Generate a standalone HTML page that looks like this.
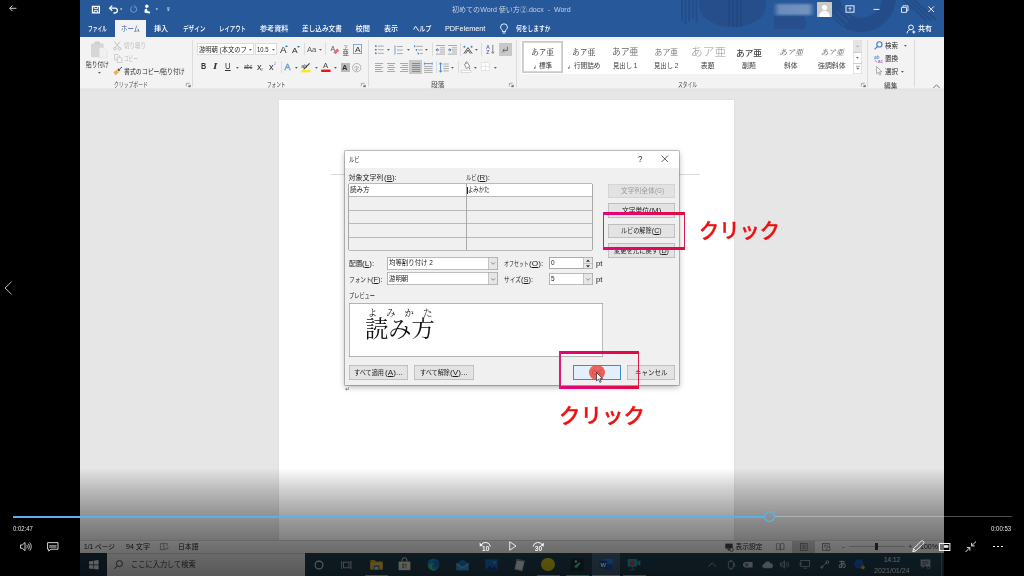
<!DOCTYPE html>
<html lang="ja"><head><meta charset="utf-8"><title>ルビ - Word</title>
<style>
html,body{margin:0;padding:0;background:#000;}
#root{position:relative;width:1024px;height:576px;overflow:hidden;background:#000;will-change:transform;font-family:"Liberation Sans","Noto Sans CJK JP",sans-serif;}
.t{position:absolute;white-space:nowrap;line-height:1;transform-origin:0 50%;}
svg{position:absolute;overflow:visible;}
</style></head><body><div id="root">
<div id="vid" style="position:absolute;left:0;top:0;width:1024px;height:576px;filter:blur(0.55px);will-change:transform">
<div style="position:absolute;left:80px;top:0px;width:864px;height:576px;background:#e6e6e6;"></div>
<div style="position:absolute;left:80px;top:0px;width:864px;height:37px;background:#27589a;"></div>
<div style="position:absolute;left:80px;top:37px;width:864px;height:51px;background:#f3f3f3;"></div>
<div style="position:absolute;left:80px;top:88px;width:864px;height:3px;background:linear-gradient(180deg,#ececec,#e3e3e3 55%,#e6e6e6);"></div>
<div style="position:absolute;left:279.2px;top:99.9px;width:454.9px;height:441.1px;background:#fff;box-shadow:0 0 0 0.6px #dedede;"></div>
<div style="position:absolute;left:331px;top:174.2px;width:369px;height:0.8px;background:#d9d9d9;"></div>
<div style="position:absolute;left:80px;top:540.5px;width:864px;height:12.5px;background:#f3f3f3;"></div>
<div style="position:absolute;left:80px;top:540.3px;width:864px;height:0.7px;background:#d0d0d0;"></div>
<div style="position:absolute;left:80px;top:552.8px;width:864px;height:23.2px;background:#1f3a52;"></div>
<svg style="left:80px;top:0" width="864" height="37" viewBox="80 0 864 37"><g fill="none" stroke="#244c88"><path d="M682 0v21M685.600 0v24M689.200 0v22M692.800 0v19M696.400 0v23" stroke-width="1.800"/><path d="M699 0h67v6a33.500 21 0 0 1-67 0z" fill="#254e8b" stroke="none"/><path d="M729 0v26M733 0v27M737 0v27M741 0v26" stroke="#224882" stroke-width="2"/><path d="M774 16h30a11 11 0 0 1 0 13h-30z" fill="#264f8c" stroke="none"/><circle cx="861" cy="-3" r="28" stroke-width="14"/><path d="M832 14l12 12M836 11l12 12M840 8l11 11" stroke="#2b579a" stroke-width="1.200"/><path d="M904 0l22 20M909 0l22 20M914 0l22 20" stroke-width="1.800"/></g></svg>
<svg style="left:80px;top:0" width="120" height="20" viewBox="80 0 120 20" fill="none" stroke="#fff" stroke-width="1.1"><path d="M92.400 6.400h7v6.400h-7z" stroke-width="1.200"/><path d="M94.200 6.400v2.200h3.400V6.400M94.200 12.800v-2.200h3.400v2.200" stroke-width="0.9"/><path d="M110 8.2h5a2.4 2.4 0 0 1 0 4.8h-1.5" stroke-width="1.3"/><path d="M112.2 5.6l-2.6 2.6 2.6 2.6" stroke-width="1.3"/><path d="M120 8.6l1.2 1.3 1.2-1.3z" fill="#fff" stroke="none"/><path d="M135.8 7.2a3 3 0 1 1-3.4-.6" stroke="#6f8fc2" stroke-width="1.1"/><path d="M133.6 5l2.4 1.8-2.2 1.2" stroke="#6f8fc2" stroke-width="0.9"/><circle cx="146.8" cy="6.3" r="1.7" fill="#fff" stroke="none"/><path d="M144.6 12.8v-3.2l2.2-1 .6 2.2 2.6 1v1.6z" fill="#fff" stroke="none"/><path d="M155.6 8.6l1.2 1.3 1.2-1.3z" fill="#fff" stroke="none"/><path d="M167 9.6l1.3 1.3 1.3-1.3z" fill="#fff" stroke="none"/><path d="M167 8h2.6" stroke-width="0.8"/></svg>
<span class="t" style="left:451.6px;top:5.6px;font-size:7.2px;color:#c6d2e6;transform:scaleX(0.979);">初めてのWord 使い方②.docx&nbsp; -&nbsp; Word</span>
<div style="position:absolute;left:773px;top:3.5px;width:42px;height:11px;background:linear-gradient(90deg,rgba(190,205,228,.0),rgba(190,205,228,.45) 15%,rgba(190,205,228,.5) 85%,rgba(190,205,228,0));filter:blur(1.2px)"></div>
<svg style="left:817px;top:1.5px" width="15" height="15" viewBox="0 0 15 15"><rect width="15" height="15" rx="0.5" fill="#c9c9c9"/><circle cx="7.5" cy="5.6" r="2.7" fill="#fff"/><path d="M2.2 15c0-4.4 2.3-6 5.3-6s5.3 1.6 5.3 6z" fill="#fff"/></svg>
<svg style="left:840px;top:0" width="104" height="20" viewBox="840 0 104 20" fill="none" stroke="#e9eef7" stroke-width="1"><rect x="846" y="5.8" width="8" height="6.4"/><path d="M850 10.6V7.8M848.6 9l1.4-1.4 1.4 1.4" stroke-width="0.9"/><path d="M873.5 9.4h6"/><path d="M901.5 7.4h5v5h-5zM903 7.4V5.8h5v5h-1.5" stroke-width="0.9"/><path d="M928.4 6.4l5.6 5.6M934 6.4l-5.6 5.6"/></svg>
<div style="position:absolute;left:114.6px;top:19.6px;width:31.6px;height:17.6px;background:#f3f3f3;"></div>
<span class="t" style="left:87.6px;top:24.6px;font-size:7.2px;color:#fff;font-weight:500;transform:scaleX(0.654);">ファイル</span>
<span class="t" style="left:120.5px;top:24.6px;font-size:7.2px;color:#3c5f9e;transform:scaleX(0.89);">ホーム</span>
<span class="t" style="left:153.5px;top:24.6px;font-size:7.2px;color:#fff;font-weight:500;transform:scaleX(0.98);">挿入</span>
<span class="t" style="left:182.5px;top:24.6px;font-size:7.2px;color:#fff;font-weight:500;transform:scaleX(0.782);">デザイン</span>
<span class="t" style="left:218.5px;top:24.6px;font-size:7.2px;color:#fff;font-weight:500;transform:scaleX(0.751);">レイアウト</span>
<span class="t" style="left:259.6px;top:24.6px;font-size:7.2px;color:#fff;font-weight:500;transform:scaleX(0.987);">参考資料</span>
<span class="t" style="left:301.6px;top:24.6px;font-size:7.2px;color:#fff;font-weight:500;transform:scaleX(0.925);">差し込み文書</span>
<span class="t" style="left:355.6px;top:24.6px;font-size:7.2px;color:#fff;font-weight:500;">校閲</span>
<span class="t" style="left:384.2px;top:24.6px;font-size:7.2px;color:#fff;font-weight:500;transform:scaleX(0.987);">表示</span>
<span class="t" style="left:412.6px;top:24.6px;font-size:7.2px;color:#fff;font-weight:500;transform:scaleX(0.853);">ヘルプ</span>
<span class="t" style="left:444.6px;top:24.6px;font-size:7.2px;color:#fff;font-weight:500;transform:scaleX(1.011);">PDFelement</span>
<span class="t" style="left:516px;top:24.6px;font-size:7.2px;color:#fff;font-weight:500;transform:scaleX(0.8);">何をしますか</span>
<svg style="left:499px;top:22px" width="10" height="13" viewBox="0 0 10 13" fill="none" stroke="#fff" stroke-width="0.9"><path d="M3.4 8.2c-1.2-.9-1.8-1.8-1.8-3a3.4 3.4 0 0 1 6.8 0c0 1.2-.6 2.100-1.800 3v1.400H3.400z"/><path d="M3.600 11h2.800"/></svg>
<svg style="left:905.600px;top:24.400px" width="11" height="10" viewBox="0 0 11 10" fill="none" stroke="#fff" stroke-width="0.95"><circle cx="5" cy="3.400" r="2.400"/><path d="M1 9.400c.3-2.200 1.400-3.400 2.800-3.700M7.800 6.400v3.200M6.200 8h3.200"/></svg>
<span class="t" style="left:918.4px;top:24.6px;font-size:7.2px;color:#fff;font-weight:500;transform:scaleX(0.973);">共有</span>
<svg style="left:88px;top:40px" width="22" height="20" viewBox="88 40 22 20"><rect x="91" y="43.4" width="12.600" height="13.800" rx="0.8" fill="#d6d6d6"/><rect x="94.600" y="41.400" width="5.400" height="3.400" rx="0.8" fill="#cfcfcf"/><path d="M99.200 47.800h5.200l2.600 2.600v7.400h-7.800z" fill="#f1f1f1" stroke="#dcdcdc" stroke-width="0.6"/></svg>
<span class="t" style="left:85.9px;top:60.5px;font-size:7.2px;color:#2a2a2a;transform:scaleX(0.793);">貼り付け</span>
<svg style="left:97.6px;top:72.0px" width="2.8" height="1.700" viewBox="0 0 2.800 1.700"><path d="M0 0h2.800L1.400 1.700z" fill="#555"/></svg>
<svg style="left:113px;top:40.500px" width="8.500" height="9.500" viewBox="0 0 8.500 9.500" fill="none" stroke="#bdbdbd" stroke-width="0.9"><path d="M1.400 0.500l4.800 6M7.100 0.500l-4.800 6"/><circle cx="1.900" cy="7.700" r="1.300"/><circle cx="6.600" cy="7.700" r="1.300"/></svg>
<span class="t" style="left:123.6px;top:41.8px;font-size:7.2px;color:#bcbcbc;transform:scaleX(0.765);">切り取り</span>
<svg style="left:113.500px;top:54px" width="8.500" height="9" viewBox="0 0 8.500 9" fill="none" stroke="#c4c4c4" stroke-width="0.8"><path d="M0.500 0.500h3.600l1 1v4.200H0.500z"/><path d="M3.200 3.200h3.600l1 1v4.300H3.200z" fill="#f3f3f3"/></svg>
<span class="t" style="left:123.6px;top:54.9px;font-size:7.2px;color:#bcbcbc;transform:scaleX(0.64);">コピー</span>
<svg style="left:112.800px;top:67px" width="10" height="9.500" viewBox="0 0 10 9.500"><path d="M0.300 5.200l3.400-2.400 2.200 2.800-3.400 2.600z" fill="#eeb244"/><path d="M4.300 2.400l1.600-1.200 1.500 2-1.500 1.200z" fill="#555"/><path d="M6.800 1.800l2.200-1.600" stroke="#555" stroke-width="1"/></svg>
<span class="t" style="left:123.6px;top:68.1px;font-size:7.2px;color:#2a2a2a;transform:scaleX(0.822);">書式のコピー/貼り付け</span>
<span class="t" style="left:114.2px;top:82.25px;font-size:6.9px;color:#444;transform:scaleX(0.701);">クリップボード</span>
<svg style="left:186.20000000000002px;top:83.2px" width="4.600" height="3.800" viewBox="0 0 4.600 3.800"><path d="M0.300 3.400V0.300h3.400" fill="none" stroke="#7a7a7a" stroke-width="0.600"/><path d="M1.900 1.700l2.500 2M4.400 1.900v1.900H2.200z" fill="#5a5a5a" stroke="#5a5a5a" stroke-width="0.400"/></svg>
<div style="position:absolute;left:192.3px;top:40px;width:0.8px;height:47px;background:#dcdcdc;"></div>
<div style="position:absolute;left:197px;top:42.700px;width:56.600px;height:12.600px;background:#fff;box-shadow:inset 0 0 0 0.7px #d2d2d2"></div>
<div style="position:absolute;left:255.300px;top:42.700px;width:21.800px;height:12.600px;background:#fff;box-shadow:inset 0 0 0 0.7px #d2d2d2"></div>
<span class="t" style="left:198.8px;top:45.8px;font-size:7.2px;color:#2a2a2a;transform:scaleX(0.874);">游明朝 (本文のフ</span>
<svg style="left:249.2px;top:49.0px" width="2.8" height="1.700" viewBox="0 0 2.800 1.700"><path d="M0 0h2.800L1.400 1.700z" fill="#555"/></svg>
<span class="t" style="left:257.2px;top:45.7px;font-size:7.4px;color:#2a2a2a;transform:scaleX(0.792);">10.5</span>
<svg style="left:271.6px;top:49.0px" width="2.8" height="1.700" viewBox="0 0 2.800 1.700"><path d="M0 0h2.800L1.400 1.700z" fill="#555"/></svg>
<span class="t" style="left:279.6px;top:45.3px;font-size:9.4px;color:#2a2a2a;transform:scaleX(1.053);">A</span>
<svg style="left:285.400px;top:44.500px" width="3" height="2"><path d="M0 2L1.500 0 3 2z" fill="#3c78c8"/></svg>
<span class="t" style="left:292.4px;top:46.8px;font-size:8px;color:#2a2a2a;transform:scaleX(1.048);">A</span>
<svg style="left:297.200px;top:45.500px" width="3" height="2"><path d="M0 0h3L1.500 2z" fill="#3c78c8"/></svg>
<div style="position:absolute;left:304px;top:43px;width:0.8px;height:12px;background:#dcdcdc;"></div>
<span class="t" style="left:307px;top:45.6px;font-size:8px;color:#555;transform:scaleX(0.959);">Aa</span>
<svg style="left:318.6px;top:49.2px" width="2.8" height="1.700" viewBox="0 0 2.800 1.700"><path d="M0 0h2.800L1.400 1.700z" fill="#555"/></svg>
<div style="position:absolute;left:325.2px;top:43px;width:0.8px;height:12px;background:#dcdcdc;"></div>
<svg style="left:329.500px;top:44px" width="10" height="11" viewBox="0 0 10 11"><text x="0.400" y="6.600" font-size="7" font-family="Liberation Sans,sans-serif" fill="#555">A</text><path d="M3.400 8.200l3.800-3.600 2 2-3.800 3.600z" fill="#e8657a"/></svg>
<svg style="left:341.500px;top:43.500px" width="8" height="12" viewBox="0 0 8 12"><text x="1.400" y="4.600" font-size="4.400" font-family="Liberation Sans,Noto Sans CJK JP,sans-serif" fill="#444">ア</text><text x="0.400" y="11" font-size="6.400" font-family="Liberation Sans,Noto Sans CJK JP,sans-serif" fill="#555">亜</text></svg>
<div style="position:absolute;left:352.800px;top:44.400px;width:9px;height:9.800px;box-shadow:inset 0 0 0 0.8px #6f94c4"></div>
<span class="t" style="left:354.6px;top:45.7px;font-size:7.8px;color:#333;transform:scaleX(1.076);">A</span>
<span class="t" style="left:200.6px;top:63.2px;font-size:8.2px;color:#333;font-weight:700;transform:scaleX(0.878);">B</span>
<span class="t" style="left:213.4px;top:63.2px;font-size:8.2px;color:#333;font-family:'Liberation Serif',serif;transform:scaleX(1.38);font-style:italic;font-weight:700;">I</span>
<span class="t" style="left:225px;top:63.0px;font-size:8.2px;color:#333;transform:scaleX(0.946);text-decoration:underline;text-decoration-thickness:0.700px;text-underline-offset:1px;">U</span>
<svg style="left:236.4px;top:67.2px" width="2.8" height="1.700" viewBox="0 0 2.800 1.700"><path d="M0 0h2.800L1.400 1.700z" fill="#555"/></svg>
<span class="t" style="left:243.6px;top:64.2px;font-size:6.6px;color:#555;transform:scaleX(0.78);text-decoration:line-through;text-decoration-thickness:0.350px;">abc</span>
<span class="t" style="left:257px;top:62.7px;font-size:8.6px;color:#2a2a2a;font-weight:500;transform:scaleX(1.071);">x</span>
<span class="t" style="left:261.4px;top:68.2px;font-size:4px;color:#3c78c8;transform:scaleX(0.895);">2</span>
<span class="t" style="left:269.2px;top:62.7px;font-size:8.6px;color:#2a2a2a;font-weight:500;transform:scaleX(1.071);">x</span>
<span class="t" style="left:273.6px;top:61.8px;font-size:4px;color:#3c78c8;transform:scaleX(0.895);">2</span>
<div style="position:absolute;left:280.5px;top:61px;width:0.8px;height:12px;background:#dcdcdc;"></div>
<svg style="left:283.600px;top:62px" width="8" height="10" viewBox="0 0 8 10"><text x="0.600" y="8.200" font-size="9" font-family="Liberation Sans,sans-serif" fill="#fff" stroke="#6aa2d8" stroke-width="0.600">A</text></svg>
<svg style="left:294.6px;top:67.2px" width="2.8" height="1.700" viewBox="0 0 2.800 1.700"><path d="M0 0h2.800L1.400 1.700z" fill="#555"/></svg>
<svg style="left:301.200px;top:61.500px" width="10" height="11" viewBox="0 0 10 11"><text x="0.200" y="5.600" font-size="5.400" font-family="Liberation Sans,sans-serif" fill="#444">ab</text><path d="M2.600 7.400L8.600 1.400" stroke="#444" stroke-width="1.100"/><rect x="0.200" y="8" width="9.200" height="2.400" fill="#ffe81a"/></svg>
<svg style="left:314.6px;top:67.2px" width="2.8" height="1.700" viewBox="0 0 2.800 1.700"><path d="M0 0h2.800L1.400 1.700z" fill="#555"/></svg>
<svg style="left:320.800px;top:61px" width="10" height="11.500" viewBox="0 0 10 11.500"><text x="2" y="7.200" font-size="7.800" font-family="Liberation Sans,sans-serif" fill="#444">A</text><rect x="0.200" y="8.600" width="9.400" height="2.400" fill="#e8131b"/></svg>
<svg style="left:334.1px;top:67.2px" width="2.8" height="1.700" viewBox="0 0 2.800 1.700"><path d="M0 0h2.800L1.400 1.700z" fill="#555"/></svg>
<div style="position:absolute;left:340.6px;top:62.6px;width:9.0px;height:9.4px;background:#b9b9b9;"></div>
<span class="t" style="left:342.4px;top:63.5px;font-size:7.8px;color:#333;font-weight:700;transform:scaleX(0.957);">A</span>
<svg style="left:352.400px;top:62.600px" width="9.400" height="9.400" viewBox="0 0 9.400 9.400"><circle cx="4.700" cy="4.700" r="4.200" fill="none" stroke="#888" stroke-width="0.600"/><text x="2.300" y="6.700" font-size="4.800" font-family="Liberation Sans,Noto Sans CJK JP,sans-serif" fill="#777">字</text></svg>
<span class="t" style="left:266.5px;top:82.45px;font-size:6.9px;color:#444;transform:scaleX(0.671);">フォント</span>
<svg style="left:360.8px;top:83.2px" width="4.600" height="3.800" viewBox="0 0 4.600 3.800"><path d="M0.300 3.400V0.300h3.400" fill="none" stroke="#7a7a7a" stroke-width="0.600"/><path d="M1.900 1.700l2.500 2M4.400 1.900v1.900H2.200z" fill="#5a5a5a" stroke="#5a5a5a" stroke-width="0.400"/></svg>
<div style="position:absolute;left:368.2px;top:40px;width:0.8px;height:47px;background:#dcdcdc;"></div>
<svg style="left:375px;top:45px" width="9" height="9.500" viewBox="0 0 9 9.500"><g fill="#3f7bc4"><rect x="0" y="0.300" width="1.600" height="1.600"/><rect x="0" y="3.900" width="1.600" height="1.600"/><rect x="0" y="7.500" width="1.600" height="1.600"/></g><g stroke="#979797" stroke-width="0.800"><path d="M3 1.100h5.800M3 4.700h5.800M3 8.300h5.800"/></g></svg>
<svg style="left:387.3px;top:49.2px" width="2.8" height="1.700" viewBox="0 0 2.800 1.700"><path d="M0 0h2.800L1.400 1.700z" fill="#555"/></svg>
<svg style="left:394.300px;top:44.600px" width="9" height="10" viewBox="0 0 9 10"><path d="M1 0.400v9.200" stroke="#3f7bc4" stroke-width="0.700"/><g stroke="#979797" stroke-width="0.800"><path d="M3 1.500h5.800M3 5h5.800M3 8.600h5.800"/></g></svg>
<svg style="left:406.8px;top:49.2px" width="2.8" height="1.700" viewBox="0 0 2.800 1.700"><path d="M0 0h2.800L1.400 1.700z" fill="#555"/></svg>
<svg style="left:413.800px;top:44.600px" width="9" height="10" viewBox="0 0 9 10"><g fill="#3f7bc4"><rect x="0" y="0.400" width="1.200" height="1.800"/><rect x="1.800" y="4" width="1.200" height="1.800"/><rect x="3.600" y="7.600" width="1.200" height="1.800"/></g><g stroke="#979797" stroke-width="0.800"><path d="M2.200 1.300h6.600M4 4.900h4.800M5.800 8.500h3"/></g></svg>
<svg style="left:425.1px;top:49.2px" width="2.8" height="1.700" viewBox="0 0 2.800 1.700"><path d="M0 0h2.800L1.400 1.700z" fill="#555"/></svg>
<div style="position:absolute;left:432.2px;top:43px;width:0.8px;height:13px;background:#dcdcdc;"></div>
<svg style="left:435.800px;top:45px" width="9" height="9.500" viewBox="0 0 9 9.500"><g stroke="#979797" stroke-width="0.800"><path d="M0 0.500h9M4 2.800h5M4 4.900h5M4 7h5M0 9.100h9"/></g><path d="M0.200 4.900h3M1.600 3.400l-1.500 1.500 1.500 1.500" stroke="#3f7bc4" stroke-width="1" fill="none"/></svg>
<svg style="left:447.800px;top:45px" width="9" height="9.500" viewBox="0 0 9 9.500"><g stroke="#979797" stroke-width="0.800"><path d="M0 0.500h9M4 2.800h5M4 4.900h5M4 7h5M0 9.100h9"/></g><path d="M0 4.900h3M1.600 3.400l1.500 1.500-1.500 1.500" stroke="#3f7bc4" stroke-width="1" fill="none"/></svg>
<div style="position:absolute;left:460.3px;top:43px;width:0.8px;height:13px;background:#dcdcdc;"></div>
<svg style="left:463.400px;top:45px" width="10" height="9.500" viewBox="0 0 10 9.500"><path d="M0.800 8.600l4.200-6 4.200 6M2.600 8.600l2.400-3.600 2.400 3.600" stroke="#444" stroke-width="0.900" fill="none"/><path d="M0.200 1.800h2.400M1.400 0.600v2.400M7.400 1.800h2.400M8.600 0.600v2.400" stroke="#3f7bc4" stroke-width="0.700"/></svg>
<svg style="left:474.8px;top:49.2px" width="2.8" height="1.700" viewBox="0 0 2.800 1.700"><path d="M0 0h2.800L1.400 1.700z" fill="#555"/></svg>
<div style="position:absolute;left:481.4px;top:43px;width:0.8px;height:13px;background:#dcdcdc;"></div>
<svg style="left:485.600px;top:44.400px" width="9" height="10.500" viewBox="0 0 9 10.500"><text x="0" y="4.800" font-size="5.400" font-weight="700" font-family="Liberation Sans,sans-serif" fill="#3f7bc4">A</text><text x="0.200" y="10.200" font-size="5.400" font-weight="700" font-family="Liberation Sans,sans-serif" fill="#9a4fb0">Z</text><path d="M6.800 0.800v8.400M5.400 7.800l1.400 1.600 1.400-1.600" stroke="#666" stroke-width="0.800" fill="none"/></svg>
<div style="position:absolute;left:498.8px;top:43px;width:13.0px;height:13.3px;background:#c8c8c8;"></div>
<svg style="left:501.400px;top:45.600px" width="8" height="8" viewBox="0 0 8 8" fill="none" stroke="#555" stroke-width="0.800"><path d="M6.400 0.800v3.600H2M3.400 3l-1.600 1.400 1.600 1.400"/><path d="M1 6.800l1.200-1.200" stroke-width="0.600"/></svg>
<svg style="left:375px;top:62.6px" width="8.2" height="11" viewBox="0 0 8.2 11" stroke="#979797" stroke-width="0.8"><path d="M0 0.5h8.2"/><path d="M0 2.5h6.4"/><path d="M0 4.5h8.2"/><path d="M0 6.5h6.4"/><path d="M0 8.5h8.2"/></svg>
<svg style="left:387.3px;top:62.6px" width="8.2" height="11" viewBox="0 0 8.2 11" stroke="#979797" stroke-width="0.8"><path d="M0.0 0.5h8.2"/><path d="M1.3 2.5h5.6"/><path d="M0.0 4.5h8.2"/><path d="M1.3 6.5h5.6"/><path d="M0.0 8.5h8.2"/></svg>
<svg style="left:399.6px;top:62.6px" width="8.2" height="11" viewBox="0 0 8.2 11" stroke="#979797" stroke-width="0.8"><path d="M0.0 0.5h8.2"/><path d="M1.8 2.5h6.4"/><path d="M0.0 4.5h8.2"/><path d="M1.8 6.5h6.4"/><path d="M0.0 8.5h8.2"/></svg>
<div style="position:absolute;left:409.3px;top:60.2px;width:12.9px;height:13.8px;background:#c8c8c8;"></div>
<svg style="left:411.6px;top:62.6px" width="8.2" height="11" viewBox="0 0 8.2 11" stroke="#7a7a7a" stroke-width="0.8"><path d="M0 0.5h8.2"/><path d="M0 2.5h8.2"/><path d="M0 4.5h8.2"/><path d="M0 6.5h8.2"/><path d="M0 8.5h8.2"/></svg>
<svg style="left:424.400px;top:61.600px" width="8.600" height="11" viewBox="0 0 8.600 11"><path d="M0.400 0.400v2.400M8.200 0.400v2.400M0.800 1.600h7" stroke="#3f7bc4" stroke-width="0.800"/><g stroke="#979797" stroke-width="0.800"><path d="M0 4.400h8.600M0 6.400h8.600M0 8.400h8.600M0 10.400h8.600"/></g></svg>
<div style="position:absolute;left:436.2px;top:61px;width:0.8px;height:12px;background:#dcdcdc;"></div>
<svg style="left:439px;top:61.600px" width="10" height="11" viewBox="0 0 10 11"><path d="M1.600 0.800v9.400M0.200 2.400l1.400-1.600 1.400 1.600M0.200 8.600l1.400 1.600 1.400-1.600" stroke="#3f7bc4" stroke-width="0.900" fill="none"/><g stroke="#979797" stroke-width="0.800"><path d="M4.400 2h5.400M4.400 4.300h5.400M4.400 6.600h5.400M4.400 8.900h5.400"/></g></svg>
<svg style="left:450.6px;top:67.2px" width="2.8" height="1.700" viewBox="0 0 2.800 1.700"><path d="M0 0h2.800L1.400 1.700z" fill="#555"/></svg>
<div style="position:absolute;left:457.7px;top:61px;width:0.8px;height:12px;background:#dcdcdc;"></div>
<svg style="left:460.800px;top:61px" width="10.500" height="12" viewBox="0 0 10.500 12"><path d="M3.400 3.400l3-1.800 2.400 3.800-3.400 2z" fill="#fff" stroke="#666" stroke-width="0.700"/><path d="M4.600 2.600c-.4-1.600 1-2.600 1.800-1.200" stroke="#666" stroke-width="0.600" fill="none"/><path d="M8.600 6.200c.6.800.8 1.400.4 1.800s-1 .2-.9-.6z" fill="#3f7bc4"/><rect x="0.200" y="9.200" width="9.800" height="2.200" fill="#fff" stroke="#bbb" stroke-width="0.500"/></svg>
<svg style="left:473.90000000000003px;top:67.2px" width="2.8" height="1.700" viewBox="0 0 2.800 1.700"><path d="M0 0h2.800L1.400 1.700z" fill="#555"/></svg>
<svg style="left:480.600px;top:62.400px" width="8.800" height="8.800" viewBox="0 0 8.800 8.800"><rect x="0.400" y="0.400" width="8" height="8" fill="#fff" stroke="#bdbdbd" stroke-width="0.600" stroke-dasharray="0.8 0.600"/><path d="M4.400 0.400v8M0.400 4.400h8" stroke="#bdbdbd" stroke-width="0.600" stroke-dasharray="0.8 0.600"/></svg>
<svg style="left:493.6px;top:67.2px" width="2.8" height="1.700" viewBox="0 0 2.800 1.700"><path d="M0 0h2.800L1.400 1.700z" fill="#555"/></svg>
<span class="t" style="left:430.7px;top:82.35px;font-size:6.9px;color:#444;transform:scaleX(0.98);">段落</span>
<svg style="left:509.0px;top:83.2px" width="4.600" height="3.800" viewBox="0 0 4.600 3.800"><path d="M0.300 3.400V0.300h3.400" fill="none" stroke="#7a7a7a" stroke-width="0.600"/><path d="M1.900 1.700l2.500 2M4.400 1.900v1.900H2.200z" fill="#5a5a5a" stroke="#5a5a5a" stroke-width="0.400"/></svg>
<div style="position:absolute;left:515.8px;top:40px;width:0.8px;height:47px;background:#dcdcdc;"></div>
<div style="position:absolute;left:520.8px;top:40px;width:332.2px;height:33.9px;background:#fff;"></div>
<div style="position:absolute;left:521.600px;top:41.200px;width:41.400px;height:31.600px;box-shadow:inset 0 0 0 1.800px #c9c9c9"></div>
<span class="t" style="left:531px;top:48.9px;font-size:7.8px;color:#333;font-family:'Liberation Serif','Noto Serif CJK JP','Noto Serif CJK SC',serif;transform:scaleX(0.983);">あア亜</span>
<span class="t" style="left:538.8px;top:63.45px;font-size:6.9px;color:#3a3a3a;transform:scaleX(0.958);">標準</span>
<span class="t" style="left:533px;top:65.1px;font-size:5px;color:#444;transform:scaleX(0.9);">↲</span>
<span class="t" style="left:572px;top:48.9px;font-size:7.8px;color:#333;font-family:'Liberation Serif','Noto Serif CJK JP','Noto Serif CJK SC',serif;">あア亜</span>
<span class="t" style="left:573.5px;top:63.45px;font-size:6.9px;color:#3a3a3a;transform:scaleX(0.961);">行間詰め</span>
<span class="t" style="left:567px;top:65.1px;font-size:5px;color:#444;transform:scaleX(0.9);">↲</span>
<span class="t" style="left:612px;top:48.4px;font-size:8.8px;color:#6a6a6a;">あア亜</span>
<span class="t" style="left:612.6px;top:63.45px;font-size:6.9px;color:#3a3a3a;transform:scaleX(0.923);">見出し 1</span>
<span class="t" style="left:654.6px;top:48.9px;font-size:7.8px;color:#777;">あア亜</span>
<span class="t" style="left:654.2px;top:63.45px;font-size:6.9px;color:#3a3a3a;transform:scaleX(0.923);">見出し 2</span>
<span class="t" style="left:690.7px;top:46.65px;font-size:11.5px;color:#979797;font-weight:300;transform:scaleX(1.017);">あア亜</span>
<span class="t" style="left:700.8px;top:63.45px;font-size:6.9px;color:#3a3a3a;">表題</span>
<span class="t" style="left:736px;top:48.6px;font-size:8.4px;color:#444;font-weight:500;transform:scaleX(1.035);">あア亜</span>
<span class="t" style="left:742px;top:63.45px;font-size:6.9px;color:#3a3a3a;">副題</span>
<span class="t" style="left:779px;top:48.9px;font-size:7.8px;color:#555;font-family:'Liberation Serif','Noto Serif CJK JP','Noto Serif CJK SC',serif;transform:scaleX(1.026);font-style:italic;">あア亜</span>
<span class="t" style="left:783.5px;top:63.45px;font-size:6.9px;color:#3a3a3a;transform:scaleX(0.98);">斜体</span>
<span class="t" style="left:820.5px;top:48.9px;font-size:7.8px;color:#555;font-family:'Liberation Serif','Noto Serif CJK JP','Noto Serif CJK SC',serif;font-style:italic;">あア亜</span>
<span class="t" style="left:818px;top:63.45px;font-size:6.9px;color:#3a3a3a;">強調斜体</span>
<div style="position:absolute;left:853px;top:39.9px;width:8.8px;height:34.3px;background:#fff;"></div>
<div style="position:absolute;left:853px;top:39.900px;width:8.800px;height:34.300px;box-shadow:inset 0 0 0 0.600px #d0d0d0"></div>
<div style="position:absolute;left:853.4px;top:40.3px;width:8.0px;height:12.1px;background:#e4e4e4;"></div>
<div style="position:absolute;left:853px;top:52.4px;width:8.8px;height:0.6px;background:#d0d0d0;"></div>
<div style="position:absolute;left:853px;top:63.4px;width:8.8px;height:0.6px;background:#d0d0d0;"></div>
<svg style="left:855.800px;top:45.400px" width="3.200" height="2"><path d="M0 2h3.200L1.600 0z" fill="#b5b5b5"/></svg>
<svg style="left:856.0px;top:57.400000000000006px" width="2.8" height="1.700" viewBox="0 0 2.800 1.700"><path d="M0 0h2.800L1.400 1.700z" fill="#666"/></svg>
<svg style="left:855.600px;top:66.400px" width="3.600" height="4.400" viewBox="0 0 3.600 4.400"><path d="M0 0.300h3.600" stroke="#666" stroke-width="0.600"/><path d="M0.200 1.800h3.200L1.800 3.800z" fill="#666"/></svg>
<span class="t" style="left:677.6px;top:82.35px;font-size:6.9px;color:#444;transform:scaleX(0.689);">スタイル</span>
<svg style="left:861.1999999999999px;top:83.2px" width="4.600" height="3.800" viewBox="0 0 4.600 3.800"><path d="M0.300 3.400V0.300h3.400" fill="none" stroke="#7a7a7a" stroke-width="0.600"/><path d="M1.900 1.700l2.500 2M4.400 1.900v1.900H2.200z" fill="#5a5a5a" stroke="#5a5a5a" stroke-width="0.400"/></svg>
<div style="position:absolute;left:867.4px;top:40px;width:0.8px;height:47px;background:#dcdcdc;"></div>
<svg style="left:874px;top:40.800px" width="9" height="9" viewBox="0 0 9 9" fill="none" stroke="#3f7bc4" stroke-width="1.100"><circle cx="5.400" cy="3.400" r="2.600"/><path d="M3.500 5.400L0.600 8.400"/></svg>
<span class="t" style="left:885px;top:41.6px;font-size:7.2px;color:#2a2a2a;transform:scaleX(0.903);">検索</span>
<svg style="left:904.1px;top:44.800000000000004px" width="2.8" height="1.700" viewBox="0 0 2.800 1.700"><path d="M0 0h2.800L1.400 1.700z" fill="#555"/></svg>
<svg style="left:873.600px;top:53.600px" width="10" height="9.500" viewBox="0 0 10 9.500"><text x="0" y="4.600" font-size="5" font-family="Liberation Sans,sans-serif" fill="#3f7bc4">ab</text><text x="3.800" y="9.200" font-size="5" font-family="Liberation Sans,sans-serif" fill="#9a4fb0">ac</text><path d="M1.200 5.600c0 1.600.8 2.400 2.200 2.400" stroke="#666" stroke-width="0.600" fill="none"/></svg>
<span class="t" style="left:885px;top:54.6px;font-size:7.2px;color:#2a2a2a;transform:scaleX(0.903);">置換</span>
<svg style="left:875.600px;top:66px" width="7" height="10" viewBox="0 0 7 10"><path d="M0.600 0.600v7.200l1.800-1.600 1.200 2.800 1.100-.5-1.200-2.700h2.400z" fill="#fff" stroke="#777" stroke-width="0.600"/></svg>
<span class="t" style="left:885px;top:67.7px;font-size:7.2px;color:#2a2a2a;transform:scaleX(0.903);">選択</span>
<svg style="left:901.2px;top:71.0px" width="2.8" height="1.700" viewBox="0 0 2.800 1.700"><path d="M0 0h2.800L1.400 1.700z" fill="#555"/></svg>
<span class="t" style="left:883.5px;top:82.55px;font-size:6.9px;color:#444;transform:scaleX(0.965);">編集</span>
<div style="position:absolute;left:913.6px;top:40px;width:0.8px;height:47px;background:#dcdcdc;"></div>
<svg style="left:932.600px;top:84px" width="7" height="4.500" viewBox="0 0 7 4.500"><path d="M0.400 4l3.100-3.200L6.600 4" fill="none" stroke="#666" stroke-width="0.900"/></svg>
<div style="position:absolute;left:345px;top:150.6px;width:333.6px;height:234.4px;background:#f0f0f0;box-shadow:0 1.500px 6px rgba(0,0,0,.32),0 0 0 0.600px rgba(90,90,90,.55)"></div>
<div style="position:absolute;left:345px;top:150.6px;width:333.6px;height:17.0px;background:#fff;"></div>
<span class="t" style="left:349px;top:155.8px;font-size:7px;color:#222;transform:scaleX(0.743);">ルビ</span>
<span class="t" style="left:638px;top:154.7px;font-size:9px;color:#222;transform:scaleX(0.877);">?</span>
<svg style="left:661.400px;top:155.400px" width="7.600" height="7.600" viewBox="0 0 7.600 7.600"><path d="M0.600 0.600l6.400 6.400M7 0.600L0.600 7" stroke="#333" stroke-width="0.800"/></svg>
<span class="t" style="left:348.6px;top:173.8px;font-size:7px;color:#1e1e1e;">対象文字列</span>
<span class="t" style="left:383.59999999999997px;top:173.8px;font-size:7px;color:#1e1e1e;transform:scaleX(1.133);">(<u>B</u>):</span>
<span class="t" style="left:466px;top:173.8px;font-size:7px;color:#1e1e1e;transform:scaleX(0.743);">ルビ</span>
<span class="t" style="left:476.59999999999997px;top:173.8px;font-size:7px;color:#1e1e1e;transform:scaleX(1.112);">(<u>R</u>):</span>
<div style="position:absolute;left:348.8px;top:183.5px;width:243.6px;height:66.8px;background:#f0f0f0;"></div>
<div style="position:absolute;left:348.8px;top:183.5px;width:243.6px;height:13.3px;background:#fff;"></div>
<div style="position:absolute;left:348.8px;top:183.15px;width:243.6px;height:0.7px;background:#b9b9b9;"></div>
<div style="position:absolute;left:348.8px;top:196.45000000000002px;width:243.6px;height:0.7px;background:#b9b9b9;"></div>
<div style="position:absolute;left:348.8px;top:209.85px;width:243.6px;height:0.7px;background:#b9b9b9;"></div>
<div style="position:absolute;left:348.8px;top:223.25px;width:243.6px;height:0.7px;background:#b9b9b9;"></div>
<div style="position:absolute;left:348.8px;top:236.55px;width:243.6px;height:0.7px;background:#b9b9b9;"></div>
<div style="position:absolute;left:348.8px;top:249.95000000000002px;width:243.6px;height:0.7px;background:#b9b9b9;"></div>
<div style="position:absolute;left:348.45px;top:183.5px;width:0.7px;height:66.8px;background:#a9a9a9;"></div>
<div style="position:absolute;left:465.65px;top:183.5px;width:0.7px;height:66.8px;background:#a9a9a9;"></div>
<div style="position:absolute;left:592.05px;top:183.5px;width:0.7px;height:66.8px;background:#a9a9a9;"></div>
<span class="t" style="left:350px;top:187.0px;font-size:6.8px;color:#222;transform:scaleX(0.961);">読み方</span>
<span class="t" style="left:468.2px;top:187.1px;font-size:6.6px;color:#222;transform:scaleX(0.811);">よみかた</span>
<div style="position:absolute;left:467.4px;top:186.6px;width:0.6px;height:7.6px;background:#222;"></div>
<div style="position:absolute;left:608.4px;top:183.6px;width:66.2px;height:14.4px;background:#e2e2e2;box-shadow:inset 0 0 0 0.7px #cfcfcf"></div>
<span class="t" style="left:620.6px;top:187.4px;font-size:7px;color:#9a9a9a;transform:scaleX(0.966);">文字列全体</span>
<span class="t" style="left:654.6px;top:187.4px;font-size:7px;color:#9a9a9a;transform:scaleX(0.89);">(G)</span>
<div style="position:absolute;left:608.4px;top:203.4px;width:66.2px;height:14.6px;background:#e3e3e3;box-shadow:inset 0 0 0 0.7px #b4b4b4"></div>
<span class="t" style="left:622px;top:207.3px;font-size:7px;color:#1e1e1e;transform:scaleX(0.964);">文字単位</span>
<span class="t" style="left:649.2px;top:207.3px;font-size:7px;color:#1e1e1e;transform:scaleX(1.177);">(<u>M</u>)</span>
<div style="position:absolute;left:608.4px;top:223.6px;width:66.2px;height:14.4px;background:#e3e3e3;box-shadow:inset 0 0 0 0.7px #b4b4b4"></div>
<span class="t" style="left:621px;top:227.4px;font-size:7px;color:#1e1e1e;transform:scaleX(0.874);">ルビの解除</span>
<span class="t" style="left:651.8000000000001px;top:227.4px;font-size:7px;color:#1e1e1e;">(<u>C</u>)</span>
<div style="position:absolute;left:608.4px;top:243.2px;width:66.2px;height:14.4px;background:#e3e3e3;box-shadow:inset 0 0 0 0.7px #b4b4b4"></div>
<span class="t" style="left:614.4px;top:247.0px;font-size:7px;color:#1e1e1e;transform:scaleX(0.898);">変更を元に戻す</span>
<span class="t" style="left:658.6px;top:247.0px;font-size:7px;color:#1e1e1e;transform:scaleX(1.026);">(<u>D</u>)</span>
<span class="t" style="left:348.6px;top:259.9px;font-size:7px;color:#1e1e1e;transform:scaleX(0.971);">配置</span>
<span class="t" style="left:362.4px;top:259.9px;font-size:7px;color:#1e1e1e;transform:scaleX(1.158);">(<u>L</u>):</span>
<span class="t" style="left:348.6px;top:275.7px;font-size:7px;color:#1e1e1e;transform:scaleX(0.807);">フォント</span>
<span class="t" style="left:371.4px;top:275.7px;font-size:7px;color:#1e1e1e;transform:scaleX(1.064);">(<u>F</u>):</span>
<div style="position:absolute;left:386.9px;top:256.8px;width:111.5px;height:13.1px;background:#fff;"></div>
<div style="position:absolute;left:488.0px;top:256.8px;width:10.4px;height:13.1px;background:#e6e6e6;"></div>
<div style="position:absolute;left:487.7px;top:256.8px;width:0.6px;height:13.1px;background:#c4c4c4;"></div>
<svg style="left:490.9px;top:262.05px" width="4.400" height="2.800" viewBox="0 0 4.400 2.800"><path d="M0.300 0.300l1.900 2 1.900-2" fill="none" stroke="#666" stroke-width="0.700"/></svg>
<span class="t" style="left:389.09999999999997px;top:259.95px;font-size:6.8px;color:#222;transform:scaleX(0.945);">均等割り付け 2</span>
<div style="position:absolute;left:386.9px;top:256.8px;width:111.5px;height:13.1px;box-shadow:inset 0 0 0 0.800px #a6a6a6"></div>
<div style="position:absolute;left:386.9px;top:272.4px;width:111.5px;height:13.1px;background:#fff;"></div>
<div style="position:absolute;left:488.0px;top:272.4px;width:10.4px;height:13.1px;background:#e6e6e6;"></div>
<div style="position:absolute;left:487.7px;top:272.4px;width:0.6px;height:13.1px;background:#c4c4c4;"></div>
<svg style="left:490.9px;top:277.65px" width="4.400" height="2.800" viewBox="0 0 4.400 2.800"><path d="M0.300 0.300l1.900 2 1.900-2" fill="none" stroke="#666" stroke-width="0.700"/></svg>
<span class="t" style="left:389.09999999999997px;top:275.55px;font-size:6.8px;color:#222;transform:scaleX(0.947);">游明朝</span>
<div style="position:absolute;left:386.9px;top:272.4px;width:111.5px;height:13.1px;box-shadow:inset 0 0 0 0.800px #a6a6a6"></div>
<span class="t" style="left:504.2px;top:259.9px;font-size:7px;color:#1e1e1e;transform:scaleX(0.709);">オフセット</span>
<span class="t" style="left:529.2px;top:259.9px;font-size:7px;color:#1e1e1e;transform:scaleX(1.176);">(<u>O</u>):</span>
<span class="t" style="left:504.2px;top:275.7px;font-size:7px;color:#1e1e1e;transform:scaleX(0.817);">サイズ</span>
<span class="t" style="left:521.4000000000001px;top:275.7px;font-size:7px;color:#1e1e1e;transform:scaleX(1.08);">(<u>S</u>):</span>
<div style="position:absolute;left:549.2px;top:256.5px;width:44.2px;height:12.9px;background:#fff;"></div>
<span class="t" style="left:551.4000000000001px;top:259.55px;font-size:6.8px;color:#222;transform:scaleX(0.952);">0</span>
<div style="position:absolute;left:549.2px;top:256.5px;width:44.2px;height:12.9px;box-shadow:inset 0 0 0 0.800px #a6a6a6"></div>
<div style="position:absolute;left:583.4px;top:256.5px;width:10.0px;height:12.9px;background:#e9e9e9;"></div>
<div style="position:absolute;left:583.4px;top:262.7px;width:9.3px;height:0.5px;background:#c4c4c4;"></div>
<div style="position:absolute;left:583.1px;top:256.5px;width:0.6px;height:12.9px;background:#c4c4c4;"></div>
<div style="position:absolute;left:549.200px;top:256.500px;width:44.200px;height:12.900px;box-shadow:inset 0 0 0 0.800px #a6a6a6"></div>
<svg style="left:586px;top:258.600px" width="4" height="9" viewBox="0 0 4 9"><path d="M0 2.800L2 0.400 4 2.800zM0 6.200L2 8.600 4 6.200z" fill="#333"/></svg>
<div style="position:absolute;left:549.2px;top:272.6px;width:44.2px;height:12.9px;background:#fff;"></div>
<div style="position:absolute;left:583.0px;top:272.6px;width:10.4px;height:12.9px;background:#e6e6e6;"></div>
<div style="position:absolute;left:582.6999999999999px;top:272.6px;width:0.6px;height:12.9px;background:#c4c4c4;"></div>
<svg style="left:585.9px;top:277.75px" width="4.400" height="2.800" viewBox="0 0 4.400 2.800"><path d="M0.300 0.300l1.900 2 1.900-2" fill="none" stroke="#666" stroke-width="0.700"/></svg>
<span class="t" style="left:551.4000000000001px;top:275.65px;font-size:6.8px;color:#222;transform:scaleX(0.952);">5</span>
<div style="position:absolute;left:549.2px;top:272.6px;width:44.2px;height:12.9px;box-shadow:inset 0 0 0 0.800px #a6a6a6"></div>
<span class="t" style="left:595.8px;top:260.3px;font-size:7px;color:#222;transform:scaleX(1.095);">pt</span>
<span class="t" style="left:595.8px;top:276.1px;font-size:7px;color:#222;transform:scaleX(1.095);">pt</span>
<span class="t" style="left:348.6px;top:291.9px;font-size:7px;color:#222;transform:scaleX(0.743);">プレビュー</span>
<div style="position:absolute;left:348.800px;top:302.700px;width:253.800px;height:54px;background:#fff;box-shadow:inset 0 0 0 0.700px #9c9c9c"></div>
<span class="t" style="left:365.2px;top:317.9px;font-size:23px;color:#111;font-family:'Liberation Serif','Noto Serif CJK JP','Noto Serif CJK SC',serif;transform:scaleX(1.012);">読み方</span>
<span class="t" style="left:367.7px;top:308.6px;font-size:9.4px;color:#111;font-family:'Liberation Serif','Noto Serif CJK JP','Noto Serif CJK SC',serif;">よ</span>
<span class="t" style="left:386.3px;top:308.6px;font-size:9.4px;color:#111;font-family:'Liberation Serif','Noto Serif CJK JP','Noto Serif CJK SC',serif;">み</span>
<span class="t" style="left:404.5px;top:308.6px;font-size:9.4px;color:#111;font-family:'Liberation Serif','Noto Serif CJK JP','Noto Serif CJK SC',serif;">か</span>
<span class="t" style="left:422.90000000000003px;top:308.6px;font-size:9.4px;color:#111;font-family:'Liberation Serif','Noto Serif CJK JP','Noto Serif CJK SC',serif;">た</span>
<div style="position:absolute;left:348.8px;top:365px;width:59.6px;height:14.7px;background:#e3e3e3;box-shadow:inset 0 0 0 0.7px #b4b4b4"></div>
<span class="t" style="left:354.4px;top:368.95px;font-size:7px;color:#1e1e1e;transform:scaleX(0.876);">すべて適用</span>
<span class="t" style="left:384.59999999999997px;top:368.95px;font-size:7px;color:#1e1e1e;transform:scaleX(1.172);">(<u>A</u>)...</span>
<div style="position:absolute;left:414px;top:365px;width:59.8px;height:14.7px;background:#e3e3e3;box-shadow:inset 0 0 0 0.7px #b4b4b4"></div>
<span class="t" style="left:420px;top:368.95px;font-size:7px;color:#1e1e1e;transform:scaleX(0.876);">すべて解除</span>
<span class="t" style="left:450.2px;top:368.95px;font-size:7px;color:#1e1e1e;transform:scaleX(1.172);">(<u>V</u>)...</span>
<div style="position:absolute;left:572.8px;top:364.8px;width:47.9px;height:15.0px;background:#e3f0fb;box-shadow:inset 0 0 0 1px #3a8ad6"></div>
<span class="t" style="left:592.4px;top:368.9px;font-size:7px;color:#222;transform:scaleX(0.909);">OK</span>
<div style="position:absolute;left:627px;top:364.8px;width:47.5px;height:15.0px;background:#e3e3e3;box-shadow:inset 0 0 0 0.7px #b4b4b4"></div>
<span class="t" style="left:634.6px;top:368.9px;font-size:7px;color:#1e1e1e;transform:scaleX(0.926);">キャンセル</span>
<span class="t" style="left:344.8px;top:386.4px;font-size:6px;color:#555;">↵</span>
<div style="position:absolute;left:602.7px;top:211.9px;width:82.6px;height:3.2px;background:linear-gradient(90deg,#e2047e,#e30a3e);"></div>
<div style="position:absolute;left:602.7px;top:246.5px;width:82.6px;height:3.2px;background:linear-gradient(90deg,#e2047e,#e30a3e);"></div>
<div style="position:absolute;left:602.7px;top:211.9px;width:1.5px;height:37.8px;background:#d81a78;"></div>
<div style="position:absolute;left:683.8px;top:211.9px;width:1.5px;height:37.8px;background:#d81a48;"></div>
<div style="position:absolute;left:559.4px;top:350.6px;width:80.0px;height:3.2px;background:linear-gradient(90deg,#e2047e,#e30a3e);"></div>
<div style="position:absolute;left:559.4px;top:385.8px;width:80.0px;height:3.2px;background:linear-gradient(90deg,#e2047e,#e30a3e);"></div>
<div style="position:absolute;left:559.4px;top:350.6px;width:1.5px;height:38.4px;background:#d81a78;"></div>
<div style="position:absolute;left:637.9px;top:350.6px;width:1.5px;height:38.4px;background:#d81a48;"></div>
<span class="t" style="left:699.4px;top:220.1px;font-size:21px;color:#ee1111;font-weight:500;transform:scaleX(0.964);-webkit-text-stroke:0.350px #ee1111;">クリック</span>
<span class="t" style="left:558.6px;top:404.9px;font-size:21px;color:#ee1111;font-weight:500;transform:scaleX(1.024);-webkit-text-stroke:0.350px #ee1111;">クリック</span>
<div style="position:absolute;left:589.400px;top:364.700px;width:15.600px;height:15.600px;border-radius:50%;background:rgba(238,72,66,.86)"></div>
<svg style="left:596.200px;top:372.400px" width="7.500" height="11" viewBox="0 0 7.500 11"><path d="M0.500 0.500v8.400l2-1.700 1.400 3.200 1.300-.6-1.400-3.100h2.700z" fill="#fff" stroke="#222" stroke-width="0.700"/></svg>
<span class="t" style="left:84.2px;top:543.6px;font-size:6.8px;color:#262626;transform:scaleX(0.975);">1/1 ページ</span>
<span class="t" style="left:125.6px;top:543.6px;font-size:6.8px;color:#262626;transform:scaleX(1.041);">94 文字</span>
<svg style="left:160.200px;top:543.400px" width="9" height="7.500" viewBox="0 0 9 7.500" fill="none" stroke="#666" stroke-width="0.600"><path d="M0.400 0.600h3.400v6H0.400zM3.800 0.600h3.400v2.600M3.800 6.600h1.600"/><path d="M5.600 5.200l1 1 1.800-2.200" stroke-width="0.800"/></svg>
<span class="t" style="left:178.4px;top:543.6px;font-size:6.8px;color:#262626;transform:scaleX(1.01);">日本語</span>
<svg style="left:725.400px;top:542.600px" width="9" height="9" viewBox="0 0 9 9"><rect x="0.300" y="0.600" width="7.400" height="5" fill="#444"/><rect x="2.600" y="6" width="2.800" height="1.400" fill="#444"/><circle cx="6.600" cy="6.600" r="1.800" fill="#f3f3f3" stroke="#444" stroke-width="0.800"/></svg>
<span class="t" style="left:735.4px;top:543.6px;font-size:6.8px;color:#262626;">表示設定</span>
<svg style="left:776px;top:543.200px" width="8.500" height="7.500" viewBox="0 0 8.500 7.500" fill="none" stroke="#777" stroke-width="0.700"><path d="M0.400 0.800c1.600-.6 2.800-.4 3.800.4v5.800c-1-.8-2.200-1-3.800-.4zM8 0.800c-1.600-.6-2.800-.4-3.800.4v5.800c1-.8 2.200-1 3.800-.4z"/></svg>
<div style="position:absolute;left:792.2px;top:541px;width:22.6px;height:11.8px;background:#c8c8c8;"></div>
<svg style="left:799.600px;top:543px" width="7.600" height="8" viewBox="0 0 7.600 8" fill="none" stroke="#666" stroke-width="0.700"><rect x="0.400" y="0.400" width="6.800" height="7.200"/><path d="M1.800 2.200h4M1.800 3.800h4M1.800 5.400h4"/></svg>
<svg style="left:822px;top:543px" width="9" height="8" viewBox="0 0 9 8" fill="none" stroke="#666" stroke-width="0.700"><rect x="0.400" y="0.400" width="6.800" height="6.800"/><path d="M1.800 2.200h4M1.800 3.800h2.400"/><circle cx="6.400" cy="5.800" r="1.800" fill="#f3f3f3"/></svg>
<span class="t" style="left:841.6px;top:542.6px;font-size:8px;color:#555;transform:scaleX(1.048);">-</span>
<div style="position:absolute;left:848.5px;top:546.3px;width:56.5px;height:0.7px;background:#bdbdbd;"></div>
<div style="position:absolute;left:875.2px;top:543px;width:3.2px;height:6.8px;background:#3c3c3c;"></div>
<span class="t" style="left:907.6px;top:542.8px;font-size:8px;color:#555;transform:scaleX(0.942);">+</span>
<span class="t" style="left:920.4px;top:543.6px;font-size:6.8px;color:#262626;transform:scaleX(1.035);">100%</span>
<div style="position:absolute;left:80px;top:552.8px;width:864px;height:23.2px;background:#213f4f;"></div>
<div style="position:absolute;left:80px;top:552.8px;width:27.2px;height:23.2px;background:#1b3442;"></div>
<svg style="left:89px;top:559.800px" width="9.600" height="9.600" viewBox="0 0 9.600 9.600" fill="#e8eef4"><path d="M0 1.400l4-.6v3.800H0zM4.600 0.700L9.600 0v4.600h-5zM0 5.200h4v3.800l-4-.6zM4.600 5.200h5v4.400l-5-.7z"/></svg>
<div style="position:absolute;left:107.2px;top:552.8px;width:198.0px;height:23.2px;background:#f0f0f0;"></div>
<div style="position:absolute;left:107.2px;top:552.8px;width:198.0px;height:0.7px;background:#d6d6d6;"></div>
<svg style="left:114.200px;top:559.600px" width="9" height="9.400" viewBox="0 0 9 9.400" fill="none" stroke="#333" stroke-width="0.900"><circle cx="5.400" cy="3.600" r="3"/><path d="M3.200 5.800L0.400 9"/></svg>
<span class="t" style="left:131.4px;top:561.0px;font-size:7.6px;color:#3a3a3a;transform:scaleX(0.951);">ここに入力して検索</span>
<svg style="left:314px;top:560px" width="10" height="10" viewBox="0 0 10 10"><circle cx="5" cy="5" r="3.900" fill="none" stroke="#e8e8e8" stroke-width="1.100"/></svg>
<svg style="left:340.800px;top:560px" width="11" height="10" viewBox="0 0 11 10" fill="none" stroke="#d8d8d8" stroke-width="0.800"><rect x="2.600" y="2.200" width="5.400" height="5.600"/><path d="M0.600 1v8M10 1v8M9 2.200h1M9 7.800h1"/></svg>
<svg style="left:369.600px;top:558.600px" width="13" height="11" viewBox="0 0 13 11"><path d="M0.400 1h4.400l1 1.400h6.800v8H0.400z" fill="#e0a62e"/><rect x="0.400" y="3.400" width="12.200" height="7" fill="#f5c84a"/><rect x="3.600" y="6.400" width="5.800" height="4" fill="#3d7cc0"/><rect x="4.800" y="8" width="3.400" height="2.400" fill="#f5e6a8"/></svg>
<div style="position:absolute;left:364.8px;top:574.6px;width:23.2px;height:1.4px;background:#9fc0dc;"></div>
<svg style="left:398.400px;top:557.600px" width="13" height="12.500" viewBox="0 0 13 12.500"><path d="M4 3.600V2.200a2.500 2.500 0 0 1 5 0v1.400" fill="none" stroke="#e8e8e8" stroke-width="0.900"/><rect x="0.600" y="3.600" width="11.800" height="8.600" fill="#e8e8e8"/><rect x="4.200" y="5.600" width="2" height="2" fill="#e8532b"/><rect x="6.800" y="5.600" width="2" height="2" fill="#7db52a"/><rect x="4.200" y="8.200" width="2" height="2" fill="#2a9de0"/><rect x="6.800" y="8.200" width="2" height="2" fill="#f5b82a"/></svg>
<svg style="left:427.200px;top:558.200px" width="13" height="13" viewBox="0 0 13 13"><circle cx="6.500" cy="6.500" r="6" fill="#1f8ad0"/><path d="M1 8.500a5.600 5.600 0 0 0 9.600 2.200c-2.400 1.400-5.600.2-5.600-2.400 0-1.600 1.600-2.400 2.800-1.800C7 4.600 3.200 4.200 1 8.500z" fill="#3fd08a"/><path d="M5 8.300c0-1.600 1.600-2.400 2.800-1.800.8.400 1 1.400.4 2h4.200c.6-3-1.600-6.200-5.200-6.200" fill="#1660a8" opacity=".55"/></svg>
<svg style="left:455.600px;top:558.800px" width="13" height="11.500" viewBox="0 0 13 11.500"><path d="M0.400 4.400L6.500 0.400l6.100 4v6.800H0.400z" fill="#1c7fc8"/><path d="M0.400 4.600l6.100 4 6.100-4v6.600H0.400z" fill="#3aa0e6"/><path d="M0.400 4.600l6.100 4 6.100-4" fill="none" stroke="#cfe6f7" stroke-width="0.700"/></svg>
<svg style="left:484.600px;top:558.600px" width="13" height="12" viewBox="0 0 13 12"><rect x="0.400" y="0.400" width="12.200" height="11.200" fill="#1d6fc0"/><path d="M0.400 11.600l4.200-5.200 2.600 3 2-2.200 3.400 4.400z" fill="#103f86"/><circle cx="9.400" cy="3.600" r="1.200" fill="#5aa8ea"/></svg>
<svg style="left:512.600px;top:557.800px" width="13" height="13.500" viewBox="0 0 13 13.500"><path d="M3.800 1l8 1.400-2.400 10.800-8-1.600z" fill="#aebcc8"/><path d="M4.400 2.200l6.400 1.200-1.900 8.600-6.400-1.300z" fill="#dfe7ee"/><path d="M3.800 1l8 1.400-.3 1.400-8-1.400z" fill="#6c8296"/></svg>
<div style="position:absolute;left:541.400px;top:557.800px;width:13.400px;height:13.400px;border-radius:50%;background:#d8c61a"></div>
<div style="position:absolute;left:537px;top:574.6px;width:23px;height:1.4px;background:#9fc0dc;"></div>
<svg style="left:570px;top:557.800px" width="14" height="13" viewBox="0 0 14 13"><rect x="0.400" y="0.400" width="13.200" height="12.200" rx="1.200" fill="#1c2a30"/><path d="M4 8.600l5.200-4.600 1.400 1.600-4.400 5z" fill="#2fd3b0"/><path d="M4.600 3l1.800-.8.800 1.800-1.800.8z" fill="#e8f6f2"/></svg>
<div style="position:absolute;left:566px;top:574.6px;width:23px;height:1.4px;background:#9fc0dc;"></div>
<div style="position:absolute;left:592px;top:552.8px;width:28.2px;height:23.2px;background:#46607a;"></div>
<svg style="left:599px;top:558.400px" width="14" height="12.500" viewBox="0 0 14 12.500"><rect x="4.400" y="0.400" width="9.200" height="11.600" rx="0.600" fill="#2f7fd6"/><rect x="4.400" y="6.200" width="9.200" height="5.800" fill="#1a56a8"/><rect x="0.400" y="2.800" width="7.400" height="7.400" rx="0.600" fill="#184a98"/><text x="1.500" y="8.700" font-size="5.800" font-weight="700" font-family="Liberation Sans,sans-serif" fill="#fff">W</text></svg>
<div style="position:absolute;left:592px;top:574.6px;width:28.2px;height:1.4px;background:#b9d4ea;"></div>
<svg style="left:627px;top:558.200px" width="14" height="13" viewBox="0 0 14 13"><rect x="0.600" y="1" width="9.600" height="7.800" rx="1.200" fill="#23a3bd"/><path d="M10.200 4l3.200-2v6l-3.200-2z" fill="#23a3bd"/><circle cx="5.400" cy="4.900" r="2.300" fill="#e8332b"/><path d="M5.400 8.800v2.600M3 11.800h4.800" stroke="#23a3bd" stroke-width="0.900"/></svg>
<div style="position:absolute;left:623px;top:574.6px;width:23px;height:1.4px;background:#9fc0dc;"></div>
<svg style="left:708px;top:562px" width="8.500" height="5" viewBox="0 0 8.500 5"><path d="M0.400 4.600l3.800-3.800 3.800 3.800" fill="none" stroke="#bcc5cd" stroke-width="0.800"/></svg>
<svg style="left:727.600px;top:560px" width="7" height="9.500" viewBox="0 0 7 9.500" fill="none" stroke="#bcc5cd" stroke-width="0.700"><rect x="0.400" y="1.600" width="5" height="6.600" rx="0.600"/><path d="M1.600 0.400h2.600M1.600 9.100h2.600M5.400 3.600h1.200v2.600H5.400"/></svg>
<svg style="left:742.600px;top:561px" width="10" height="7.500" viewBox="0 0 10 7.500"><rect x="1.400" y="1" width="8.200" height="5.600" rx="0.500" fill="#bcc5cd"/><rect x="0" y="2.400" width="2" height="2.600" fill="#bcc5cd"/><rect x="2.200" y="2.200" width="3" height="3" fill="#223c54" opacity=".6"/></svg>
<svg style="left:761.600px;top:560.800px" width="11" height="7.500" viewBox="0 0 11 7.500"><path d="M2.600 7.200a2.200 2.200 0 0 1-.2-4.400 3.200 3.200 0 0 1 6-.6 2.500 2.500 0 0 1 .2 5z" fill="#bcc5cd"/></svg>
<svg style="left:780.200px;top:560.200px" width="10" height="9" viewBox="0 0 10 9" fill="none" stroke="#bcc5cd" stroke-width="0.700"><path d="M0.400 3h1.800l2.400-2.200v7.400L2.200 6H0.400z" fill="#bcc5cd" fill-opacity=".25"/><path d="M6 2.800c.8.800.8 2.600 0 3.400M7.400 1.600c1.500 1.500 1.500 4.300 0 5.800"/></svg>
<svg style="left:799px;top:560.400px" width="11" height="9" viewBox="0 0 11 9" fill="none" stroke="#bcc5cd" stroke-width="0.700"><rect x="1.800" y="0.600" width="8.600" height="5.800"/><path d="M4.400 8.200h3.600M0.400 3.600h2.400M0.400 5h1.600"/></svg>
<svg style="left:819.600px;top:560.200px" width="10" height="9" viewBox="0 0 10 9" fill="none" stroke="#bcc5cd" stroke-width="1"><path d="M1.400 7.800l3.200-3.400M4.800 4.200l2-2.200"/><circle cx="7.400" cy="2.200" r="1.400"/><circle cx="1.800" cy="7.200" r="1"/></svg>
<span class="t" style="left:838px;top:560.8px;font-size:8px;color:#e4e9ee;font-weight:500;transform:scaleX(1.05);">あ</span>
<svg style="left:853.600px;top:559.400px" width="12" height="11" viewBox="0 0 12 11"><circle cx="5" cy="5" r="4.600" fill="#1b63c4"/><circle cx="9" cy="8.400" r="1.800" fill="#e8b82a"/><circle cx="8" cy="6.600" r="1" fill="#d83a2a"/></svg>
<span class="t" style="left:883.6px;top:555.7px;font-size:7px;color:#f0f3f6;transform:scaleX(0.924);">14:12</span>
<span class="t" style="left:873.6px;top:566.7px;font-size:7px;color:#f0f3f6;transform:scaleX(1.021);">2021/01/24</span>
<svg style="left:919.600px;top:559.400px" width="11" height="10.500" viewBox="0 0 11 10.500"><path d="M0.600 0.600h9.800v7H4.200L2.400 9.600V7.600H0.600z" fill="#bcc5cd" fill-opacity=".85"/><path d="M2.400 2.600h6.200M2.400 4.200h6.200M2.400 5.800h3.400" stroke="#223c54" stroke-width="0.600"/><circle cx="8.600" cy="8.200" r="1.500" fill="none" stroke="#bcc5cd" stroke-width="0.600"/></svg>
<div style="position:absolute;left:940.8px;top:552.8px;width:0.6px;height:23.2px;background:#5b7186;"></div>
</div>
<div style="position:absolute;left:0;top:467.500px;width:1024px;height:108.500px;background:linear-gradient(180deg,rgba(0,0,0,0) 0%,rgba(0,0,0,.06) 6%,rgba(0,0,0,.17) 18%,rgba(0,0,0,.28) 32%,rgba(0,0,0,.38) 46%,rgba(0,0,0,.48) 63%,rgba(0,0,0,.545) 74%,rgba(0,0,0,.60) 90%,rgba(0,0,0,.63) 100%)"></div>
<div style="position:absolute;left:0px;top:0px;width:80px;height:576px;background:#000;"></div>
<div style="position:absolute;left:944.2px;top:0px;width:79.8px;height:576px;background:#000;"></div>
<svg style="left:9px;top:5px" width="8" height="7" viewBox="0 0 8 7" fill="none" stroke="#e6e6e6" stroke-width="0.900"><path d="M0.800 3.300h6.600M3.400 0.600L0.700 3.300l2.700 2.700"/></svg>
<svg style="left:3.500px;top:281px" width="8.500" height="14" viewBox="0 0 8.500 14" fill="none" stroke="#cfcfcf" stroke-width="0.900"><path d="M7.600 0.700L1 7l6.600 6.300"/></svg>
<div style="position:absolute;left:774px;top:516.3px;width:237.5px;height:0.9px;background:rgba(255,255,255,.31);"></div>
<div style="position:absolute;left:13px;top:516.1px;width:751px;height:1.5px;background:#56b3e8;"></div>
<div style="position:absolute;left:763.600px;top:511.400px;width:11px;height:11px;border-radius:50%;box-shadow:inset 0 0 0 1.300px #56b3e8"></div>
<span class="t" style="left:12.9px;top:525.8px;font-size:6.8px;color:#e2e2e2;transform:scaleX(0.873);">0:02:47</span>
<span class="t" style="left:990.7px;top:526.0px;font-size:6.8px;color:#e2e2e2;transform:scaleX(0.89);">0:00:53</span>
<svg style="left:20.400px;top:541.200px" width="12.100" height="11.200" viewBox="0 0 13 12" fill="none" stroke="#f4f4f4" stroke-width="0.900"><path d="M0.600 4.200h2l2.800-2.600v8.800L2.600 7.800h-2z"/><path d="M7.200 4.200c.8 1 .8 2.600 0 3.600M8.800 2.800c1.600 1.800 1.600 4.600 0 6.400M10.400 1.600c2.200 2.600 2.200 6.200 0 8.800"/></svg>
<svg style="left:46.800px;top:541.600px" width="11.600" height="9.800" viewBox="0 0 12 10" fill="none" stroke="#f4f4f4" stroke-width="0.900"><path d="M0.600 0.600h10.800v6.800H4L1.800 9.400V7.400H0.600z"/><path d="M2.200 5.200h7.600" stroke-width="0.800"/><path d="M2.200 3.800h7.600" stroke-width="0.700"/></svg>
<svg style="left:479.400px;top:541.400px" width="12.500" height="11" viewBox="0 0 12.500 11" fill="none" stroke="#f4f4f4" stroke-width="1"><path d="M1.800 4.600A5 5 0 0 1 11.400 5.600"/><path d="M0.500 1.800l.3 3.700 3.300-1.300z" fill="#f4f4f4" stroke="none"/><text x="3" y="10.300" font-size="6.600" font-weight="700" font-family="Liberation Sans,sans-serif" fill="#f4f4f4" stroke="none">10</text></svg>
<svg style="left:508.600px;top:541.200px" width="8" height="10" viewBox="0 0 8 10" fill="none" stroke="#f4f4f4" stroke-width="0.900"><path d="M0.700 0.800v8.400L7 5z"/></svg>
<svg style="left:532.400px;top:541.400px" width="12.500" height="11" viewBox="0 0 12.500 11" fill="none" stroke="#f4f4f4" stroke-width="1"><path d="M10.700 4.600A5 5 0 0 0 1.100 5.600"/><path d="M12 1.800l-.3 3.700-3.300-1.300z" fill="#f4f4f4" stroke="none"/><text x="2.800" y="10.300" font-size="6.600" font-weight="700" font-family="Liberation Sans,sans-serif" fill="#f4f4f4" stroke="none">30</text></svg>
<svg style="left:911.600px;top:540.400px" width="12.500" height="12.500" viewBox="0 0 12.500 12.500" fill="none" stroke="#f4f4f4" stroke-width="1"><path d="M0.800 11.700l.8-3L9.400 0.900a1 1 0 0 1 1.400 0l.8.800a1 1 0 0 1 0 1.400L3.800 10.900z"/><path d="M1.600 8.700l2.200 2.200"/></svg>
<svg style="left:939px;top:542.600px" width="11.500" height="8" viewBox="0 0 11.500 8" fill="none" stroke="#f4f4f4" stroke-width="1"><rect x="0.500" y="0.500" width="10.400" height="7"/><rect x="5" y="2.200" width="4.400" height="2.600" fill="#f4f4f4" stroke="none"/></svg>
<svg style="left:965.400px;top:541px" width="11.500" height="11.500" viewBox="0 0 11.500 11.500" fill="none" stroke="#f4f4f4" stroke-width="0.900"><path d="M11 0.500L6.600 4.900M6.600 1.800v3.100h3.100M0.500 11l4.400-4.400M4.900 9.700V6.600H1.800"/></svg>
<div style="position:absolute;left:993.05px;top:545.8px;width:1.5px;height:1.5px;background:#f4f4f4;"></div>
<div style="position:absolute;left:997.25px;top:545.8px;width:1.5px;height:1.5px;background:#f4f4f4;"></div>
<div style="position:absolute;left:1001.45px;top:545.8px;width:1.5px;height:1.5px;background:#f4f4f4;"></div>
</div></body></html>
